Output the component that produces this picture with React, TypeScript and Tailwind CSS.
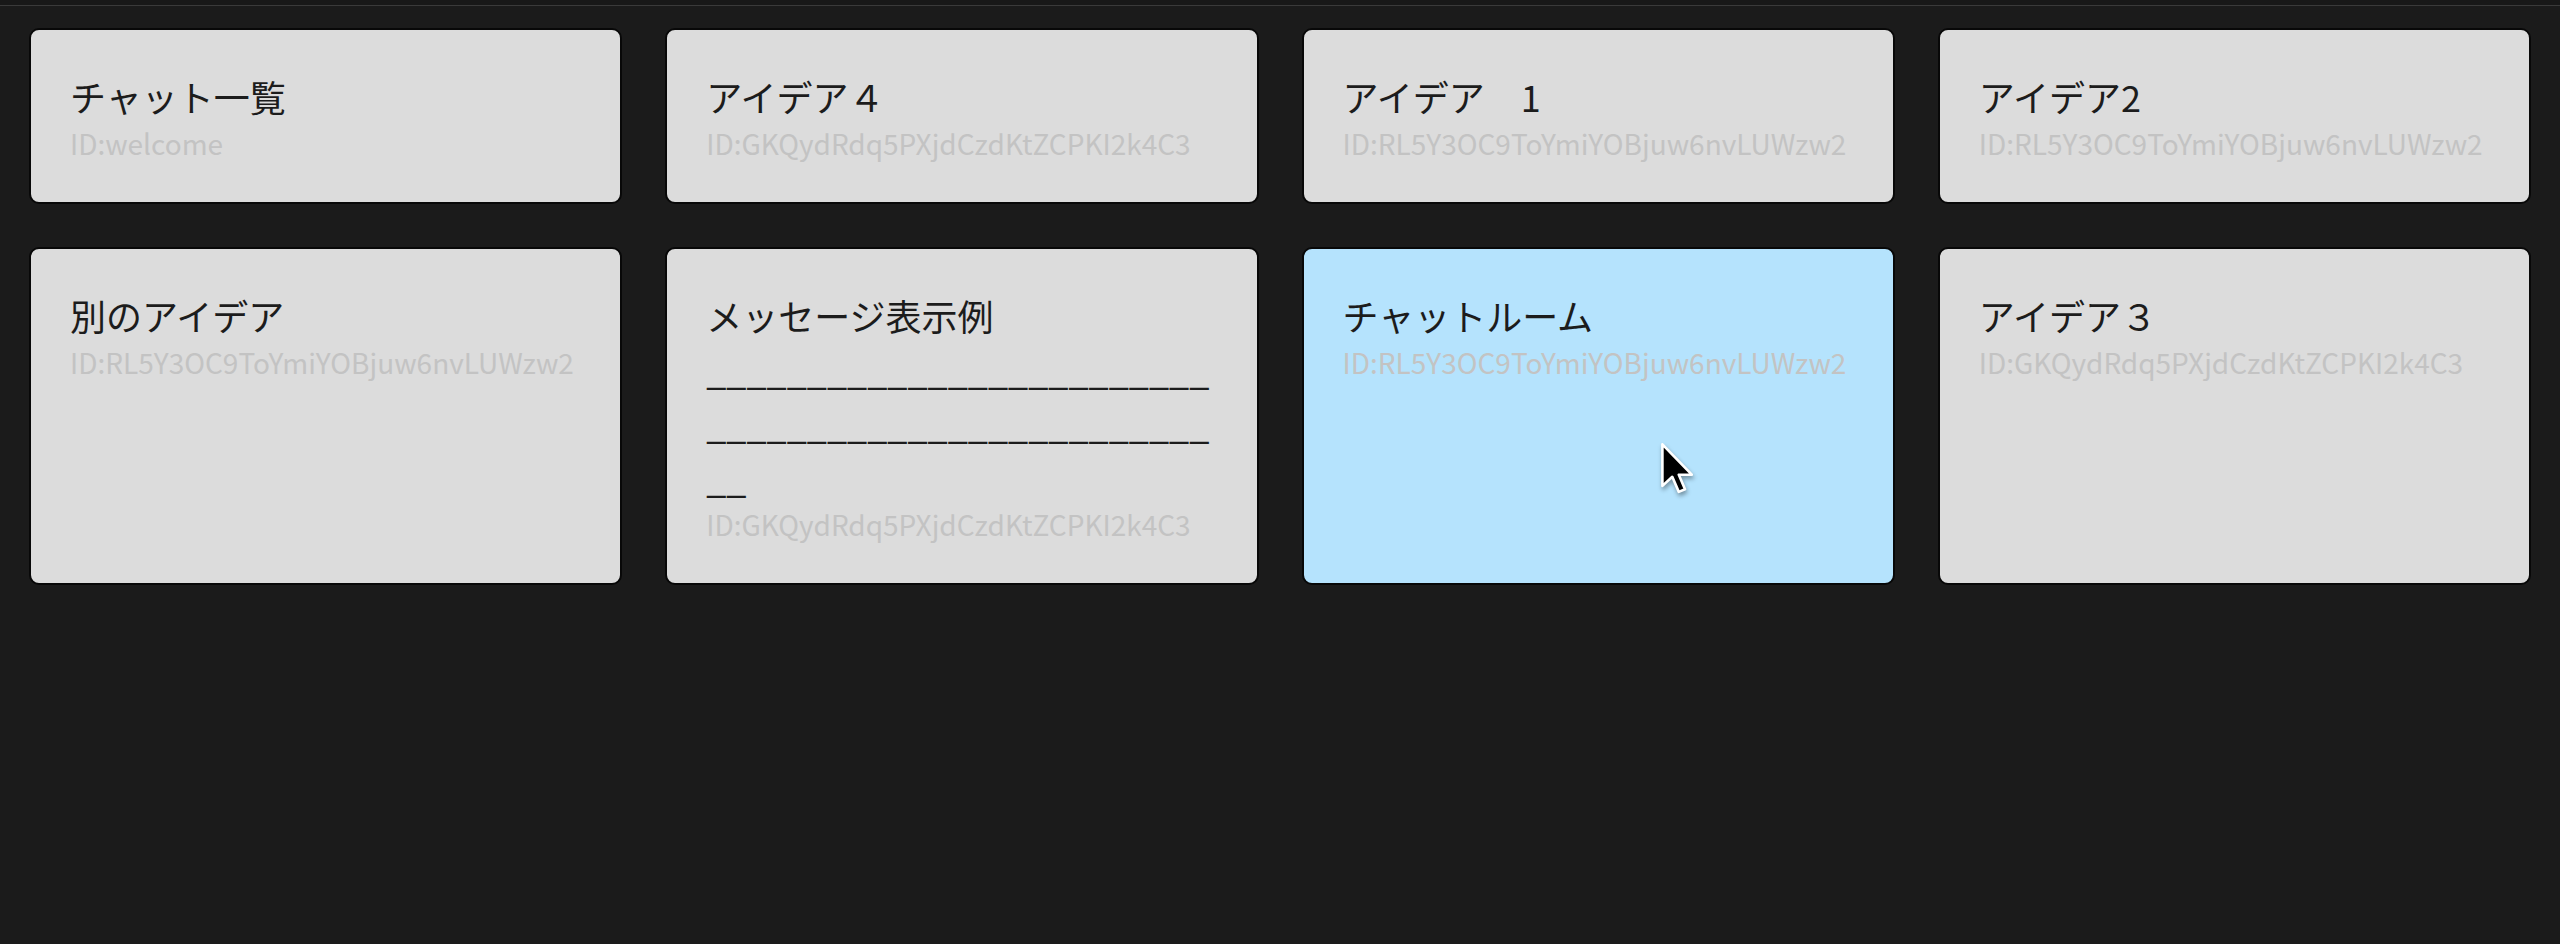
import React from 'react'

interface Room {
  title: string
  id: string
  selected?: boolean
}

const rooms: Room[] = [
  { title: 'チャット一覧', id: 'welcome' },
  { title: 'アイデア４', id: 'GKQydRdq5PXjdCzdKtZCPKI2k4C3' },
  { title: 'アイデア　1', id: 'RL5Y3OC9ToYmiYOBjuw6nvLUWzw2' },
  { title: 'アイデア2', id: 'RL5Y3OC9ToYmiYOBjuw6nvLUWzw2' },
  { title: '別のアイデア', id: 'RL5Y3OC9ToYmiYOBjuw6nvLUWzw2' },
  {
    title: 'メッセージ表示例\n' + '_'.repeat(52),
    id: 'GKQydRdq5PXjdCzdKtZCPKI2k4C3'
  },
  { title: 'チャットルーム', id: 'RL5Y3OC9ToYmiYOBjuw6nvLUWzw2', selected: true },
  { title: 'アイデア３', id: 'GKQydRdq5PXjdCzdKtZCPKI2k4C3' }
]

// mouse pointer caught in the screenshot
function Cursor() {
  return (
    <svg
      className="absolute left-[357px] top-[194px] drop-shadow-[1px_3px_2px_rgba(0,0,0,0.35)]"
      width="34"
      height="52"
      viewBox="0 0 13 20"
    >
      <path
        d="M0.5 0.5 L0.5 16.5 L4.3 13 L6.8 18.8 L9.2 17.8 L6.8 12.2 L11.8 12.2 Z"
        fill="#000"
        stroke="#fff"
        strokeWidth="1"
        strokeLinejoin="round"
      />
    </svg>
  )
}

export default function App() {
  return (
    <div
      className="min-h-[944px] bg-[#1b1b1b]"
      style={{ fontFamily: '"Noto Sans CJK JP", "Noto Sans", sans-serif' }}
    >
      <div className="h-[6px] bg-[#181818] border-b border-[#3a3a3a]" />
      <div className="grid grid-cols-4 gap-x-[43px] gap-y-[43px] px-[29px] pt-[22px]">
        {rooms.map((room, i) => (
          <div
            key={i}
            className={`relative min-h-[175px] rounded-[10px] border-2 border-[#080808] pl-[39px] pr-[40px] pt-[39px] pb-[41px] ${
              room.selected ? 'bg-[#b5e3fd]' : 'bg-[#dcdcdc]'
            }`}
          >
            <div className="text-[36px] leading-[54px] text-[#1c1c1c] whitespace-pre-wrap break-all">
              {room.title}
            </div>
            <div className="mt-[3px] text-[28px] leading-[35px] text-[#c3c3c3]">ID:{room.id}</div>
            {room.selected && <Cursor />}
          </div>
        ))}
      </div>
    </div>
  )
}
